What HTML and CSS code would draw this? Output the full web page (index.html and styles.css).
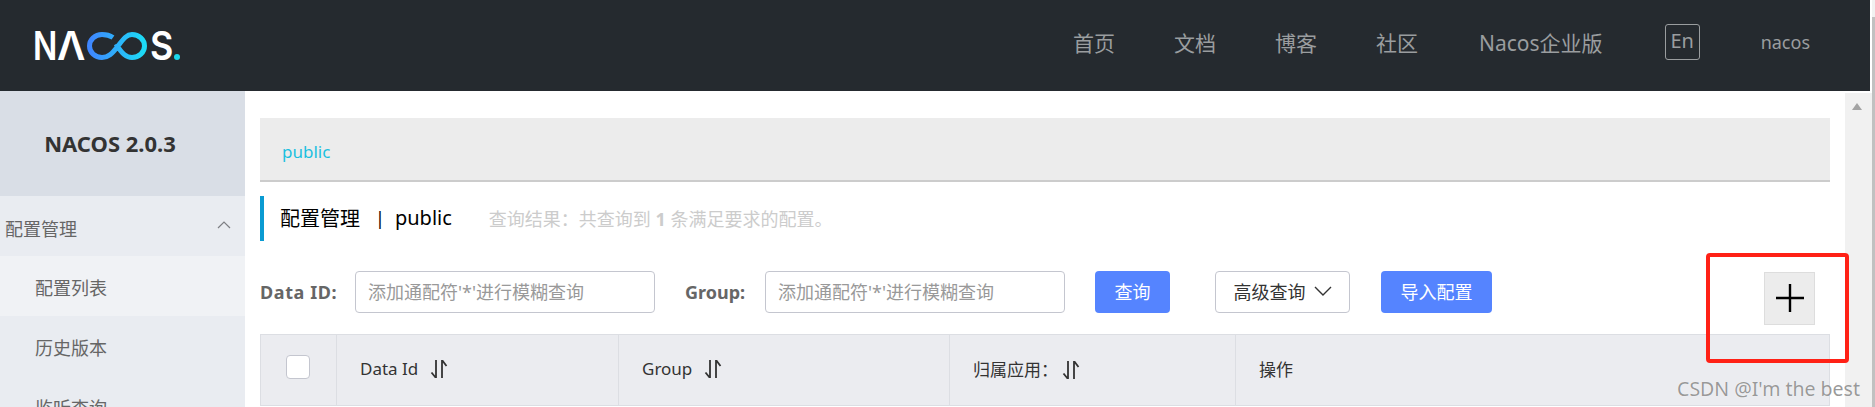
FILE: index.html
```html
<!DOCTYPE html>
<html lang="zh-CN">
<head>
  <meta charset="UTF-8">
  <title>Nacos</title>
  <link rel="stylesheet" href="styles.css">
</head>
<body>
  <!-- Top bar -->
  <header class="topbar">
    <div class="logo">
      <span class="logo-n">N</span><span class="logo-a">Λ</span>
      <svg class="logo-loop" width="60" height="28" viewBox="0 0 60 28">
        <defs>
          <linearGradient id="loopGrad" x1="0" y1="0" x2="1" y2="0">
            <stop offset="0" stop-color="#3f86ff"/>
            <stop offset="1" stop-color="#1cdcf6"/>
          </linearGradient>
        </defs>
        <path d="M26 5.5C23 3.5 19.5 2.5 15 2.5C8 2.5 2.5 7.5 2.5 14C2.5 20.5 8 25.5 15 25.5C21 25.5 25 22 31 14C37 6 40 2.5 45 2.5C52 2.5 57.5 7.5 57.5 14C57.5 20.5 52 25.5 45 25.5C39.5 25.5 35.5 22.5 29 12" fill="none" stroke="url(#loopGrad)" stroke-width="5"/>
      </svg>
      <span class="logo-s">S</span><span class="logo-dot"></span>
    </div>
    <nav class="topnav">
      <a href="#">首页</a>
      <a href="#">文档</a>
      <a href="#">博客</a>
      <a class="nav-community" href="#">社区</a>
      <a class="nav-ent" href="#">Nacos企业版</a>
      <span class="lang-btn">En</span>
      <span class="user-name">nacos</span>
    </nav>
  </header>

  <div class="page">
    <!-- Sidebar -->
    <aside class="sidebar">
      <div class="side-title">NACOS 2.0.3</div>
      <div class="side-group">配置管理
        <svg class="side-arrow" width="14" height="8" viewBox="0 0 14 8"><path d="M1 7L7 1L13 7" fill="none" stroke="#7d7f84" stroke-width="1.2"/></svg>
      </div>
      <div class="side-item active">配置列表</div>
      <div class="side-item">历史版本</div>
      <div class="side-item">监听查询</div>
    </aside>

    <!-- Main content -->
    <main class="content">
      <div class="crumb"><a href="#">public</a></div>

      <div class="title-bar">
        <span class="title-main">配置管理</span>
        <span class="title-sep">|</span>
        <span class="title-ns">public</span>
        <span class="title-hint">查询结果：共查询到 <b>1</b> 条满足要求的配置。</span>
      </div>

      <div class="search-row">
        <label class="field-label label-id">Data ID:</label>
        <input class="field-input" type="text" placeholder="添加通配符'*'进行模糊查询">
        <label class="field-label label-group">Group:</label>
        <input class="field-input" type="text" placeholder="添加通配符'*'进行模糊查询">
        <button class="btn btn-primary btn-query">查询</button>
        <button class="btn btn-normal">高级查询
          <svg width="18" height="10" viewBox="0 0 18 10"><path d="M1 1L9 9L17 1" fill="none" stroke="#333" stroke-width="1.4"/></svg>
        </button>
        <button class="btn btn-primary btn-import">导入配置</button>
        <button class="btn-add">
          <svg width="30" height="30" viewBox="0 0 30 30"><path d="M15 1V29M1 15H29" stroke="#000" stroke-width="2.4"/></svg>
        </button>
      </div>

      <table class="cfg-table">
        <thead>
          <tr>
            <th class="col-check"><span class="checkbox"></span></th>
            <th class="col-id">Data Id <svg class="sort" width="18" height="18" viewBox="0 0 18 18"><path d="M6 0V18L1.5 12.5M12 18V0L16.5 6" fill="none" stroke="#333" stroke-width="1.8"/></svg></th>
            <th class="col-group">Group <svg class="sort" width="18" height="18" viewBox="0 0 18 18"><path d="M6 0V18L1.5 12.5M12 18V0L16.5 6" fill="none" stroke="#333" stroke-width="1.8"/></svg></th>
            <th class="col-app">归属应用： <svg class="sort sort-app" width="18" height="18" viewBox="0 0 18 18"><path d="M6 0V18L1.5 12.5M12 18V0L16.5 6" fill="none" stroke="#333" stroke-width="1.8"/></svg></th>
            <th class="col-op">操作</th>
          </tr>
        </thead>
      </table>
    </main>

    <!-- Inner scrollbar -->
    <div class="scrollbar"><span class="scroll-up"></span></div>
  </div>

  <!-- Outer scrollbar, annotation and watermark sit on top of the shot -->
  <div class="page-scroll"><span class="page-thumb"></span></div>
  <div class="red-box"></div>
  <div class="watermark">CSDN @I'm the best</div>
</body>
</html>
```

FILE: styles.css
```css
/* Global */
html, body {
  margin: 0;
  padding: 0;
  height: 407px;
  overflow: hidden;
  background: #fff;
}
body {
  position: relative;
  font-family: "Noto Sans", "Noto Sans CJK SC", sans-serif;
  color: #333;
}
a {
  text-decoration: none;
  color: inherit;
}

/* Top bar */
.topbar {
  display: flex;
  align-items: center;
  justify-content: space-between;
  height: 91px;
  width: 1870px;
  background: #252a2f;
}
.logo {
  display: flex;
  align-items: center;
  margin: 0 0 0 35px;
  height: 28px;
  color: #fff;
  font-family: Inter, sans-serif;
  font-weight: 600;
  font-size: 39px;
  line-height: 28px;
}
.logo-n,
.logo-a,
.logo-s {
  display: block;
  transform-origin: left center;
}
.logo-n {
  width: 24px;
  margin-left: -2px;
  transform: scaleX(0.82);
}
.logo-a {
  width: 30px;
}
.logo-loop {
  flex: none;
}
.logo-s {
  width: 24px;
  margin-left: 3px;
  transform: scaleX(0.92);
}
.logo-dot {
  flex: none;
  width: 6px;
  height: 6px;
  margin: 23px 0 0 0;
  border-radius: 50%;
  background: #1cd6ea;
}
.topnav {
  display: flex;
  align-items: center;
  margin: -8px 60px 0 0;
  font-size: 21px;
  color: #9a9d9f;
}
.topnav a {
  margin-right: 59px;
}
.topnav .nav-community {
  margin-right: 61px;
}
.topnav .nav-ent {
  margin-right: 62px;
}
.lang-btn {
  width: 33px;
  height: 34px;
  line-height: 32px;
  text-align: center;
  border: 1px solid #9a9d9f;
  border-radius: 3px;
  font-size: 20px;
}
.user-name {
  margin-left: 61px;
  font-size: 18px;
}

/* Page */
.page {
  display: flex;
  height: 316px;
}

/* Sidebar */
.sidebar {
  width: 245px;
  flex: none;
  overflow: hidden;
  background: #e9ecf1;
  color: #666;
  font-size: 18px;
}
.side-title {
  height: 105px;
  line-height: 105px;
  background: #d9dee6;
  color: #333;
  text-align: center;
  font-weight: 700;
  font-size: 22px;
  padding-right: 25px;
}
.side-group {
  display: flex;
  align-items: center;
  justify-content: space-between;
  box-sizing: border-box;
  height: 60px;
  padding: 3px 14px 0 5px;
}
.side-arrow {
  margin-top: -6px;
}
.side-item {
  height: 60px;
  line-height: 64px;
  padding-left: 35px;
}
.side-item.active {
  background: #f0f2f5;
}

/* Main content */
.content {
  flex: none;
  width: 1570px;
  padding: 27px 0 0 15px;
}
.crumb {
  height: 62px;
  line-height: 67px;
  padding-left: 22px;
  background: #ececec;
  border-bottom: 2px solid #ccc;
  font-size: 17px;
  color: #1cc0df;
}
.title-bar {
  display: flex;
  align-items: center;
  box-sizing: border-box;
  height: 45px;
  margin-top: 14px;
  padding: 0 0 2px 16px;
  border-left: 4px solid #0a9bd2;
  color: #000;
  font-size: 20px;
}
.title-sep {
  margin: 0 10px 0 15px;
  font-size: 18px;
}
.title-hint {
  margin-left: 37px;
  font-size: 18px;
  color: #ccc;
}

/* Search row */
.search-row {
  display: flex;
  align-items: center;
  height: 42px;
  margin-top: 30px;
}
.field-label {
  font-weight: 700;
  font-size: 18px;
  color: #666;
}
.label-id {
  width: 95px;
  letter-spacing: 0.6px;
}
.label-group {
  width: 80px;
  margin-left: 30px;
}
.field-input {
  box-sizing: border-box;
  width: 300px;
  height: 42px;
  padding: 0 12px;
  border: 1px solid #c4c6cf;
  border-radius: 4px;
  outline: none;
  font-family: inherit;
  font-size: 18px;
  color: #333;
}
.field-input::placeholder {
  color: #999;
}
.btn {
  box-sizing: border-box;
  height: 42px;
  border-radius: 4px;
  font-family: inherit;
  font-size: 18px;
  padding: 0 0 2px;
}
.btn-primary {
  border: none;
  background: #5584ff;
  color: #fff;
}
.btn-query {
  width: 75px;
  margin-left: 30px;
}
.btn-normal {
  display: flex;
  align-items: center;
  justify-content: center;
  gap: 8px;
  width: 135px;
  margin-left: 45px;
  border: 1px solid #c4c6cf;
  background: #fff;
  color: #333;
}
.btn-import {
  width: 111px;
  margin-left: 31px;
}
.btn-add {
  box-sizing: border-box;
  display: flex;
  align-items: center;
  justify-content: center;
  width: 51px;
  height: 53px;
  margin: 12px 0 0 272px;
  padding: 0;
  border: 1px solid #ddd;
  background: #ececec;
}

/* Table */
.cfg-table {
  width: 1570px;
  margin-top: 21px;
  border-collapse: collapse;
  table-layout: fixed;
  font-size: 17px;
}
.cfg-table th {
  box-sizing: border-box;
  height: 71px;
  padding: 0 0 4px 23px;
  background: #ebecf0;
  border: 1px solid #dcdee3;
  text-align: left;
  font-weight: 400;
  color: #333;
}
.cfg-table .col-check {
  width: 76px;
  padding: 0 0 0 25px;
}
.col-id {
  width: 282px;
}
.col-group {
  width: 331px;
}
.col-app {
  width: 286px;
}
.checkbox {
  display: block;
  box-sizing: border-box;
  width: 24px;
  height: 24px;
  margin-bottom: 6px;
  background: #fff;
  border: 1px solid #c4c6cf;
  border-radius: 4px;
}
.sort {
  vertical-align: -3px;
  margin-left: 7px;
}
.sort-app {
  margin-left: 0;
}

/* Inner scrollbar */
.scrollbar {
  position: relative;
  flex: none;
  width: 27px;
  margin: 2px 0 0 15px;
  background: #f1f1f1;
}
.scroll-up {
  position: absolute;
  left: 7px;
  top: 10px;
  border-left: 5.5px solid transparent;
  border-right: 5.5px solid transparent;
  border-bottom: 7px solid #a3a3a3;
}

/* Outer scrollbar */
.page-scroll {
  position: absolute;
  right: 0;
  top: 0;
  width: 3px;
  height: 407px;
  background: #f1f1f1;
}
.page-thumb {
  display: block;
  height: 390px;
  margin-top: 17px;
  background: #c1c1c1;
}

/* Overlays */
.red-box {
  position: absolute;
  left: 1706px;
  top: 253px;
  width: 135px;
  height: 102px;
  border: 4px solid #ff2116;
  border-radius: 4px;
}
.watermark {
  position: absolute;
  right: 15px;
  top: 375px;
  font-size: 19.5px;
  color: rgba(120, 120, 120, 0.75);
  text-shadow: 0 0 1px #fff;
}
```
